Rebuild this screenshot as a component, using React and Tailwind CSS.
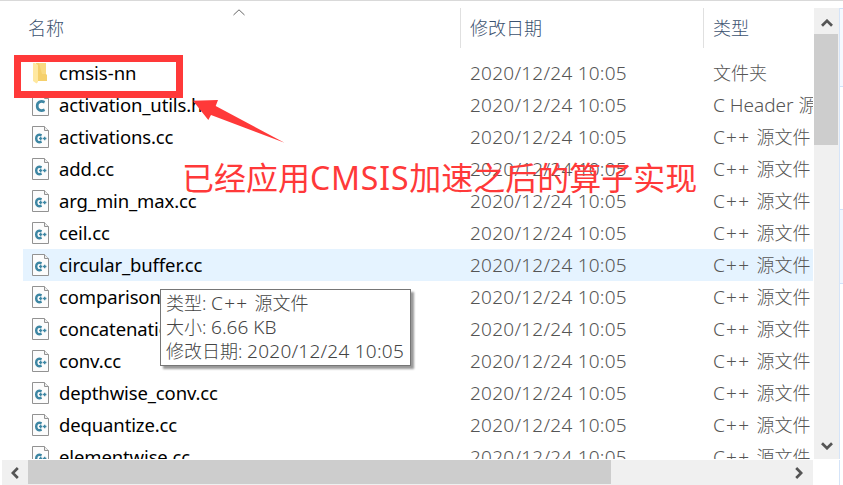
const files = [
  { name: "cmsis-nn", kind: "folder", type: ["", "文件夹"] },
  { name: "activation_utils.h", kind: "h", type: ["C Header ", "源文件"] },
  { name: "activations.cc", kind: "cc" },
  { name: "add.cc", kind: "cc" },
  { name: "arg_min_max.cc", kind: "cc" },
  { name: "ceil.cc", kind: "cc" },
  { name: "circular_buffer.cc", kind: "cc", hovered: true },
  { name: "comparisons.cc", kind: "cc" },
  { name: "concatenation.cc", kind: "cc" },
  { name: "conv.cc", kind: "cc" },
  { name: "depthwise_conv.cc", kind: "cc" },
  { name: "dequantize.cc", kind: "cc" },
  { name: "elementwise.cc", kind: "cc" },
];

function FileIcon({ kind }) {
  if (kind === "folder") {
    return (
      <svg width="18" height="24" viewBox="0 0 18 24" className="shrink-0">
        <path d="M4 2H14V13L15 14V20H5Z" fill="#f5d06c" />
        <path d="M7 2H14V13H10Z" fill="#f9da82" />
        <path d="M1 2H3L6 4V21L4.5 22.5L1 20Z" fill="#ffe8a0" />
      </svg>
    );
  }
  return (
    <svg width="18" height="24" viewBox="0 0 18 24" className="shrink-0">
      <path d="M.5 1.5H12.5L16.5 5.5V22.5H.5Z" fill="#fcfcfc" stroke="#929292" />
      <path d="M12.5 1.5V5.5H16.5" fill="#eee" stroke="#929292" />
      {kind === "h" ? (
        <path d="M12.6 9.2C8.4 7.4 5.2 9.1 5.2 13C5.2 16.9 8.4 18.6 12.6 16.8" fill="none" stroke="#3d86a3" strokeWidth="2.7" />
      ) : (
        <>
          <path d="M9.6 10.3C6.2 8.9 4.2 10.6 4.2 13.5C4.2 16.4 6.2 18.1 9.6 16.7" fill="none" stroke="#3d86a3" strokeWidth="2.5" />
          <path d="M7 13.5H10.4M8.7 11.8V15.2M11 13.5H14.4M12.7 11.8V15.2" stroke="#3d86a3" strokeWidth="1.3" />
        </>
      )}
    </svg>
  );
}

function Chevron({ className = "" }) {
  return (
    <svg width="12" height="8" viewBox="0 0 12 8" className={className}>
      <path d="M1 6.8L6 1.8L11 6.8" fill="none" stroke="#555" strokeWidth="2.7" />
    </svg>
  );
}

function Timestamp() {
  return <span className="text-[19px] tracking-[0.25px]">2020/12/24 10:05</span>;
}

function SourceType({ latin = "C++ ", cjk = "源文件" }) {
  return (
    <>
      <span className={latin === "C++ " ? "text-[19px] tracking-[1.25px]" : "text-[19px]"}>{latin}</span>
      <span>{cjk}</span>
    </>
  );
}

function Row({ file }) {
  const [latin, cjk] = file.type ?? [];
  return (
    <div className={`flex h-8 shrink-0 items-center whitespace-pre ${file.hovered ? "bg-[#e5f3ff]" : ""}`}>
      <div className="flex w-[447px] shrink-0 items-center pl-[9px]">
        <FileIcon kind={file.kind} />
        <span className={`ml-[9px] text-[18.5px] font-normal text-black ${file.kind === "folder" ? "" : "tracking-[-0.13px]"}`}>{file.name}</span>
      </div>
      <div className="w-[243px] shrink-0 text-[#555]"><Timestamp /></div>
      <div className="shrink-0 text-[18px] text-[#555]"><SourceType latin={latin} cjk={cjk} /></div>
    </div>
  );
}

export default function App() {
  return (
    <div className="relative flex h-[485px] w-[843px] flex-col overflow-hidden border-t border-[#d9d9d9] bg-white font-['Noto_Sans','Noto_Sans_CJK_SC',sans-serif] leading-6">
      <div className="flex h-[458px] pt-[7px]">
        <div className="flex w-[813px] flex-col overflow-hidden pl-[23px]">
          <div className="flex h-10 shrink-0 items-center text-[18px] font-light text-[#3c5270]">
            <span className="w-[437px] pl-[5px]">名称</span>
            <span className="flex h-full w-[243px] items-center border-l border-[#e0e0e0] pl-[9px]">修改日期</span>
            <span className="flex h-full items-center border-l border-[#e0e0e0] pl-[9px]">类型</span>
          </div>
          <div className="mt-[9px] flex min-h-0 flex-1 flex-col overflow-hidden font-light">
            {files.map((file) => <Row key={file.name} file={file} />)}
          </div>
        </div>
        <div className="ml-px flex w-[25px] flex-col bg-[#f0f0f0]">
          <div className="flex h-[26px] items-center justify-center pt-1"><Chevron /></div>
          <div className="h-[111px] w-6 bg-[#cdcdcd]" />
          <div className="flex flex-1 items-end justify-center pb-[9px]"><Chevron className="rotate-180" /></div>
        </div>
        <div className="flex w-1 flex-col border-l border-[#d5e4f8]">
          <div className="h-[79px] border-y border-[#cfe2fa] bg-[#f5f9ff]" />
          <div className="mt-[122px] h-[75px] border-y border-[#cfe2fa] bg-[#f1f7ff]" />
        </div>
      </div>
      <div className="flex h-[26px] pt-px">
        <div className="ml-0.5 flex w-[811px] bg-[#f0f0f0]">
          <div className="flex w-[26px] items-center justify-center"><Chevron className="-rotate-90" /></div>
          <div className="h-6 w-[583px] bg-[#cdcdcd]" />
          <div className="flex flex-1 items-center justify-end pr-[8px]"><Chevron className="rotate-90" /></div>
        </div>
        <div className="ml-[26px] border-l border-[#d5e4f8]" />
      </div>

      <svg width="12" height="7" viewBox="0 0 12 7" className="absolute left-[233px] top-[8px]">
        <path d="M.5 6L6 .8L11.5 6" fill="none" stroke="#666" />
      </svg>

      <div className="absolute left-[14px] top-[54px] h-[43px] w-[169px] border-7 border-[#ff3939]" />
      <svg width="96" height="48" viewBox="190 98 96 48" className="absolute left-[191px] top-[97px]">
        <path d="M192 100.7L217 100L214.7 106L283.5 142.8L210 115L207.3 120Z" fill="#ff3939" />
      </svg>
      <div className="absolute left-[182px] top-[153px] flex whitespace-nowrap text-[32px] leading-[48px] text-[#ff3939]">
        <span>已经应用</span>
        <span className="tracking-[0.8px]">CMSIS</span>
        <span>加速之后的算子实现</span>
      </div>

      <div className="absolute left-[160px] top-[288px] h-[77px] w-[251px] whitespace-pre border border-[#767676] bg-white pl-[5px] pt-px text-[18px] font-light text-[#444] shadow-[3px_3px_2px_#999]">
        <div>类型: <SourceType /></div>
        <div>大小: <span className="text-[19px]">6.66 KB</span></div>
        <div>修改日期: <Timestamp /></div>
      </div>
    </div>
  );
}
